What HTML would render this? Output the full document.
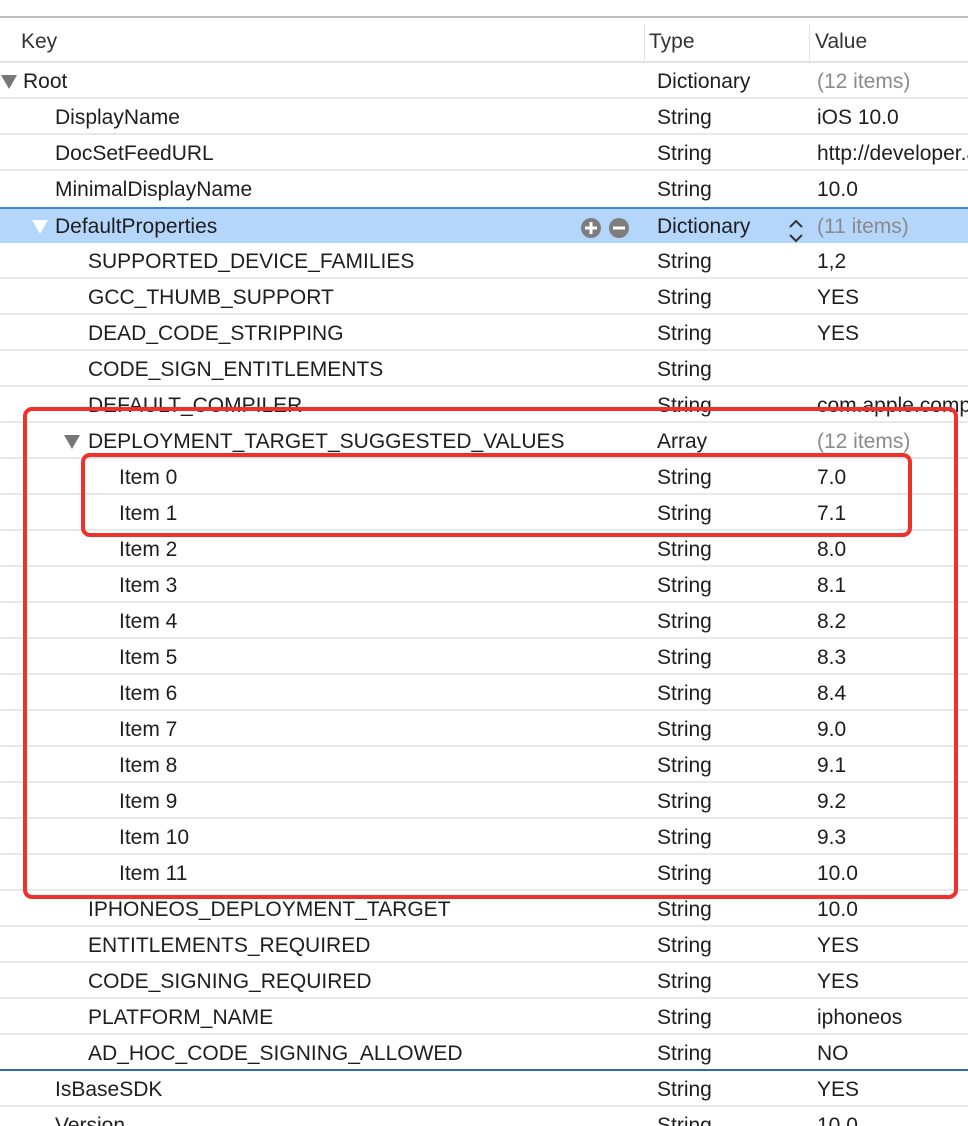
<!DOCTYPE html>
<html><head><meta charset="utf-8"><style>
*{margin:0;padding:0;box-sizing:border-box}
html,body{width:968px;height:1126px;overflow:hidden}
body{background:#fff;font-family:"Liberation Sans",sans-serif;font-size:21px;color:#1e1e1e;position:relative}
.top{position:absolute;left:0;top:0;width:968px;height:18px;background:#fff;border-bottom:2px solid #bdbdbd}
.hdr{position:absolute;left:0;top:18px;width:968px;height:45px;border-bottom:2px solid #e2e2e2}
.hdr span{position:absolute;top:12px;color:#333}
.vd{position:absolute;width:1px;height:36px;background:#e0e0e0}
.row{position:absolute;left:0;width:968px;height:36px;border-bottom:2px solid #e8e8e8;overflow:hidden}
.row span{position:absolute;top:7px;white-space:nowrap}
.t{left:657px}.v{left:817px}
.g{color:#8a8a8a}
.sel{background:#b4d6fb;border-top:2px solid #3f87d0;border-bottom:none}
.tri{position:absolute;top:12px;width:0;height:0;border-left:8px solid transparent;border-right:8px solid transparent;border-top:14px solid #777}
.red{position:absolute;border:4px solid #f0302a;border-radius:9px}
</style></head><body>
<div class="top"></div>
<div class="hdr"><span style="left:21px">Key</span><span style="left:649px">Type</span><span style="left:815px">Value</span></div>
<div class="vd" style="left:644px;top:24px"></div><div class="vd" style="left:809px;top:24px"></div>

<div class="row" style="top:63px"><div class="tri" style="left:1px"></div><span style="left:23px">Root</span><span class="t">Dictionary</span><span class="v g">(12 items)</span></div>
<div class="row" style="top:99px"><span style="left:55px">DisplayName</span><span class="t">String</span><span class="v">iOS 10.0</span></div>
<div class="row" style="top:135px"><span style="left:55px">DocSetFeedURL</span><span class="t">String</span><span class="v">http://developer.apple.com</span></div>
<div class="row" style="top:171px;border-bottom:none"><span style="left:55px">MinimalDisplayName</span><span class="t">String</span><span class="v">10.0</span></div>
<div class="row sel" style="top:207px"><div class="tri" style="left:32px;border-top-color:#fff;top:11px"></div><span style="left:55px;top:6px">DefaultProperties</span>
<svg style="position:absolute;left:580px;top:7px" width="52" height="24"><circle cx="11" cy="12" r="10" fill="#7d7d7d"/><rect x="5" y="10.5" width="12" height="3" fill="#fff"/><rect x="9.5" y="6" width="3" height="12" fill="#fff"/><circle cx="39" cy="12" r="10" fill="#7d7d7d"/><rect x="33" y="10.5" width="12" height="3" fill="#fff"/></svg>
<span class="t" style="top:6px">Dictionary</span>
<svg style="position:absolute;left:788px;top:9px" width="16" height="28"><path d="M2 9 L8 3 L14 9 M2 17 L8 23 L14 17" stroke="#333" stroke-width="2" fill="none"/></svg>
<span class="v g" style="top:6px">(11 items)</span></div>
<div class="row" style="top:243px"><span style="left:88px">SUPPORTED_DEVICE_FAMILIES</span><span class="t">String</span><span class="v">1,2</span></div>
<div class="row" style="top:279px"><span style="left:88px">GCC_THUMB_SUPPORT</span><span class="t">String</span><span class="v">YES</span></div>
<div class="row" style="top:315px"><span style="left:88px">DEAD_CODE_STRIPPING</span><span class="t">String</span><span class="v">YES</span></div>
<div class="row" style="top:351px"><span style="left:88px">CODE_SIGN_ENTITLEMENTS</span><span class="t">String</span></div>
<div class="row" style="top:387px"><span style="left:88px">DEFAULT_COMPILER</span><span class="t">String</span><span class="v">com.apple.compilers</span></div>
<div class="row" style="top:423px"><div class="tri" style="left:64px"></div><span style="left:88px">DEPLOYMENT_TARGET_SUGGESTED_VALUES</span><span class="t">Array</span><span class="v g">(12 items)</span></div>
<div class="row" style="top:459px"><span style="left:119px">Item 0</span><span class="t">String</span><span class="v">7.0</span></div>
<div class="row" style="top:495px"><span style="left:119px">Item 1</span><span class="t">String</span><span class="v">7.1</span></div>
<div class="row" style="top:531px"><span style="left:119px">Item 2</span><span class="t">String</span><span class="v">8.0</span></div>
<div class="row" style="top:567px"><span style="left:119px">Item 3</span><span class="t">String</span><span class="v">8.1</span></div>
<div class="row" style="top:603px"><span style="left:119px">Item 4</span><span class="t">String</span><span class="v">8.2</span></div>
<div class="row" style="top:639px"><span style="left:119px">Item 5</span><span class="t">String</span><span class="v">8.3</span></div>
<div class="row" style="top:675px"><span style="left:119px">Item 6</span><span class="t">String</span><span class="v">8.4</span></div>
<div class="row" style="top:711px"><span style="left:119px">Item 7</span><span class="t">String</span><span class="v">9.0</span></div>
<div class="row" style="top:747px"><span style="left:119px">Item 8</span><span class="t">String</span><span class="v">9.1</span></div>
<div class="row" style="top:783px"><span style="left:119px">Item 9</span><span class="t">String</span><span class="v">9.2</span></div>
<div class="row" style="top:819px"><span style="left:119px">Item 10</span><span class="t">String</span><span class="v">9.3</span></div>
<div class="row" style="top:855px"><span style="left:119px">Item 11</span><span class="t">String</span><span class="v">10.0</span></div>
<div class="row" style="top:891px"><span style="left:88px">IPHONEOS_DEPLOYMENT_TARGET</span><span class="t">String</span><span class="v">10.0</span></div>
<div class="row" style="top:927px"><span style="left:88px">ENTITLEMENTS_REQUIRED</span><span class="t">String</span><span class="v">YES</span></div>
<div class="row" style="top:963px"><span style="left:88px">CODE_SIGNING_REQUIRED</span><span class="t">String</span><span class="v">YES</span></div>
<div class="row" style="top:999px"><span style="left:88px">PLATFORM_NAME</span><span class="t">String</span><span class="v">iphoneos</span></div>
<div class="row" style="top:1035px;border-bottom:2px solid #2a6db5"><span style="left:88px">AD_HOC_CODE_SIGNING_ALLOWED</span><span class="t">String</span><span class="v">NO</span></div>
<div class="row" style="top:1071px"><span style="left:55px">IsBaseSDK</span><span class="t">String</span><span class="v">YES</span></div>
<div class="row" style="top:1107px"><span style="left:55px">Version</span><span class="t">String</span><span class="v">10.0</span></div>

<div class="red" style="left:23px;top:407px;width:935px;height:492px"></div>
<div class="red" style="left:81px;top:453px;width:831px;height:84px"></div>
</body></html>
